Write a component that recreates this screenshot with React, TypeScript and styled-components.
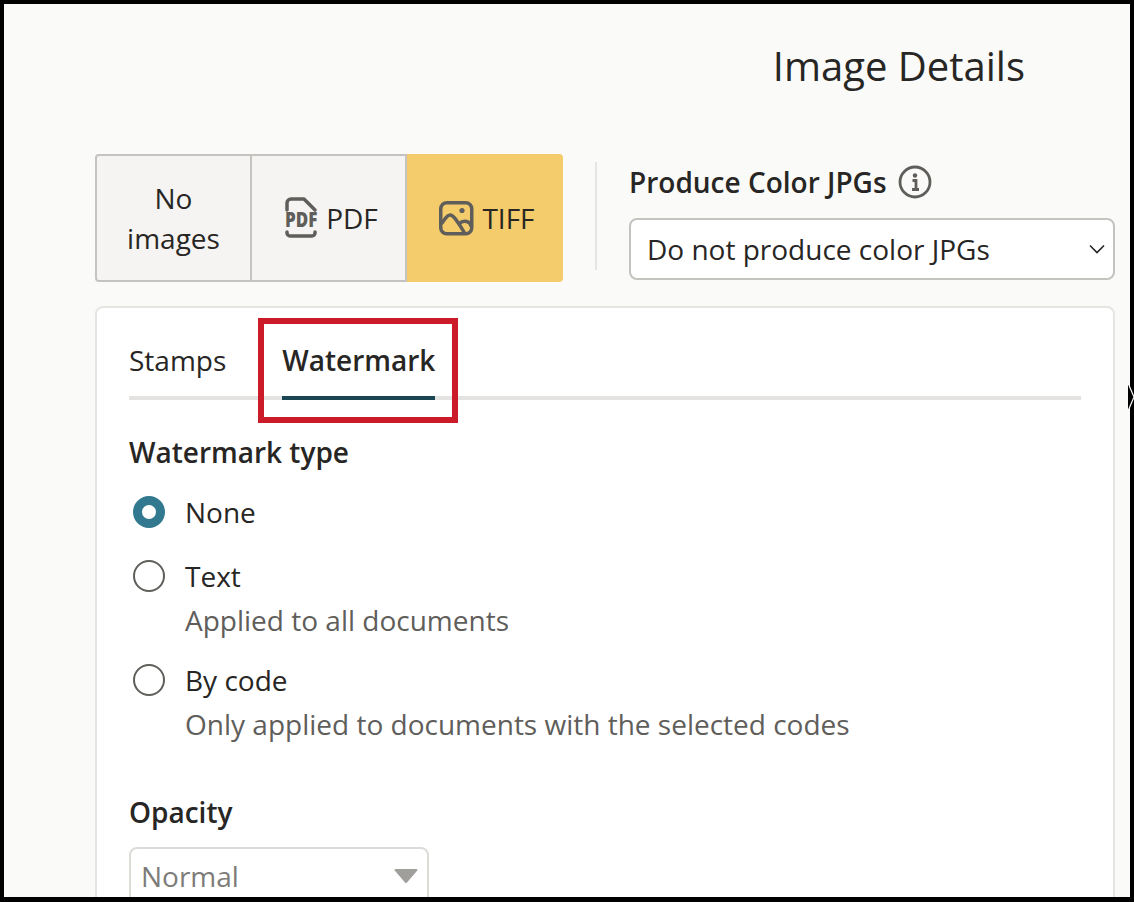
import React from 'react';
import styled, { createGlobalStyle } from 'styled-components';

const GlobalStyle = createGlobalStyle`
  html, body {
    margin: 0;
    padding: 0;
    background: #000;
  }
  * {
    box-sizing: border-box;
  }
`;

const Frame = styled.div`
  position: relative;
  width: 1134px;
  height: 902px;
  overflow: hidden;
  padding: 4px 4px 5px 4px;
  background: #000;
  font-family: 'Open Sans', 'Liberation Sans', sans-serif;
  color: #272624;
`;

const Viewport = styled.div`
  height: 100%;
  overflow: hidden;
  padding: 0 15px 0 91px;
  background: #fafaf8;
`;

const Title = styled.h1`
  margin: 0;
  height: 150px;
  padding: 35px 90px 0 0;
  text-align: right;
  font-size: 40px;
  line-height: 54px;
  font-weight: 400;
`;

const TopRow = styled.div`
  display: flex;
  align-items: flex-start;
  height: 152px;
`;

const ModeGroup = styled.div`
  display: flex;
  width: 468px;
  height: 128px;
`;

const ModeButton = styled.div<{ $active?: boolean; $first?: boolean }>`
  width: ${(p) => (p.$first ? '157px' : p.$active ? '156px' : '155px')};
  display: flex;
  align-items: center;
  justify-content: center;
  gap: 8px;
  padding-left: ${(p) => (p.$first ? '0' : '5px')};
  text-align: center;
  font-size: 28px;
  line-height: 40px;
  background: ${(p) => (p.$active ? '#f4cc6b' : '#f5f4f2')};
  border: 2px solid ${(p) => (p.$active ? '#f4cc6b' : '#c4c3c0')};
  border-left-width: ${(p) => (p.$first ? '2px' : '0')};
  border-radius: ${(p) =>
    p.$first ? '4px 0 0 4px' : p.$active ? '0 4px 4px 0' : '0'};
`;

const Divider = styled.div`
  width: 2px;
  height: 108px;
  margin: 8px 32px 0 32px;
  background: #e6e5e2;
`;

const SelectColumn = styled.div`
  flex: 1;
  min-width: 0;
`;

const FieldLabel = styled.div`
  display: flex;
  align-items: center;
  gap: 11px;
  height: 64px;
  padding: 0 0 8px 0;
  font-size: 28px;
  font-weight: 600;
`;

const SelectBox = styled.div`
  display: flex;
  align-items: center;
  justify-content: space-between;
  height: 62px;
  padding: 0 7px 0 16px;
  background: #fff;
  border: 2px solid #c4c3c0;
  border-radius: 8px;
  font-size: 28px;
`;

const Card = styled.div`
  height: 640px;
  padding: 0 32px;
  background: #fff;
  border: 2px solid #e6e5e2;
  border-radius: 8px;
`;

const TabBar = styled.div`
  display: flex;
  gap: 56px;
  height: 92px;
  border-bottom: 4px solid #e4e3e1;
`;

const Tab = styled.div<{ $active?: boolean }>`
  height: 92px;
  padding-top: 30px;
  font-size: 28px;
  line-height: 44px;
  font-weight: ${(p) => (p.$active ? 600 : 400)};
  border-bottom: 4px solid ${(p) => (p.$active ? '#1a4654' : 'transparent')};
`;

const SectionLabel = styled.div<{ $gap?: number }>`
  margin-top: ${(p) => p.$gap ?? 30}px;
  font-size: 28px;
  line-height: 44px;
  font-weight: 600;
`;

const RadioList = styled.div`
  display: flex;
  flex-direction: column;
  gap: 16px;
  margin-top: 16px;
`;

const RadioRow = styled.div`
  display: flex;
  gap: 20px;
  min-height: 48px;
  padding-left: 4px;
`;

const RadioMark = styled.span<{ $checked?: boolean }>`
  flex: none;
  width: 32px;
  height: 32px;
  margin-top: 6px;
  border-radius: 50%;
  background: #fff;
  border: ${(p) => (p.$checked ? '9px solid #32788f' : '2px solid #5f5e5b')};
`;

const RadioText = styled.div`
  font-size: 28px;
  line-height: 44px;
`;

const RadioHint = styled.div`
  color: #5f5e5b;
`;

const SmallSelect = styled.div`
  display: flex;
  justify-content: space-between;
  align-items: center;
  width: 300px;
  height: 62px;
  margin-top: 13px;
  padding: 0 9px 4px 10px;
  border: 2px solid #dcdbd8;
  border-radius: 8px;
  font-size: 28px;
  color: #7d7c79;
`;

const Caret = styled.svg`
  flex: none;
`;

const Callout = styled.div`
  position: absolute;
  left: 258px;
  top: 318px;
  width: 200px;
  height: 105px;
  border: 6px solid #cb1b28;
`;

const PointerMark = styled.svg`
  position: absolute;
  left: 1128px;
  top: 382px;
`;

const PdfIcon = () => (
  <svg width="34" height="42" viewBox="0 0 34 42" fill="none">
    <path
      d="M3 13V6a4 4 0 0 1 4-4h13l11 11M3 35v1a3 3 0 0 0 3 3h22a3 3 0 0 0 3-3v-1"
      stroke="#5f5e5b"
      strokeWidth="3.5"
      strokeLinecap="round"
      strokeLinejoin="round"
    />
    <text
      transform="translate(1 30) scale(1 1.2)"
      fontFamily="'Open Sans', sans-serif"
      fontSize="17"
      fontWeight="800"
      fill="#5f5e5b"
    >
      PDF
    </text>
  </svg>
);

const ImageIcon = () => (
  <svg width="36" height="36" viewBox="0 0 36 36" fill="none">
    <rect x="2.75" y="2.75" width="31" height="31" rx="6" stroke="#5f5e5b" strokeWidth="3.5" />
    <path
      d="M4 23c3-4 5-8 8-8 4 0 9 9 14 17M22 23c4-3 10-2 11 3"
      stroke="#5f5e5b"
      strokeWidth="3.5"
      strokeLinecap="round"
      strokeLinejoin="round"
    />
    <circle cx="24" cy="10.5" r="2.6" fill="#5f5e5b" />
  </svg>
);

const InfoIcon = () => (
  <svg width="34" height="34" viewBox="0 0 34 34" fill="none">
    <circle cx="17" cy="17" r="15" stroke="#5f5e5b" strokeWidth="2.8" />
    <circle cx="17" cy="10.5" r="2.2" fill="#5f5e5b" />
    <path d="M14.5 15.5H18V24M14 24.5h7" stroke="#5f5e5b" strokeWidth="2.8" />
  </svg>
);

const ChevronIcon = () => (
  <svg width="18" height="10" viewBox="0 0 18 10" fill="none">
    <path d="M2 1.5l7 7 7-7" stroke="#272624" strokeWidth="1.6" />
  </svg>
);

export default function App() {
  return (
    <>
      <GlobalStyle />
      <Frame>
        <Viewport>
          <Title>Image Details</Title>
          <TopRow>
            <ModeGroup>
              <ModeButton $first>
                No
                <br />
                images
              </ModeButton>
              <ModeButton>
                <PdfIcon />
                PDF
              </ModeButton>
              <ModeButton $active>
                <ImageIcon />
                TIFF
              </ModeButton>
            </ModeGroup>
            <Divider />
            <SelectColumn>
              <FieldLabel>
                Produce Color JPGs
                <InfoIcon />
              </FieldLabel>
              <SelectBox>
                Do not produce color JPGs
                <ChevronIcon />
              </SelectBox>
            </SelectColumn>
          </TopRow>
          <Card>
            <TabBar>
              <Tab>Stamps</Tab>
              <Tab $active>Watermark</Tab>
            </TabBar>
            <SectionLabel>Watermark type</SectionLabel>
            <RadioList>
              <RadioRow>
                <RadioMark $checked />
                <RadioText>None</RadioText>
              </RadioRow>
              <RadioRow>
                <RadioMark />
                <RadioText>
                  Text
                  <RadioHint>Applied to all documents</RadioHint>
                </RadioText>
              </RadioRow>
              <RadioRow>
                <RadioMark />
                <RadioText>
                  By code
                  <RadioHint>Only applied to documents with the selected codes</RadioHint>
                </RadioText>
              </RadioRow>
            </RadioList>
            <SectionLabel $gap={44}>Opacity</SectionLabel>
            <SmallSelect>
              Normal
              <Caret width="24" height="14" viewBox="0 0 24 14">
                <path d="M1.5 0h21a1 1 0 0 1 .8 1.6L13 13.4a1.3 1.3 0 0 1-2 0L.7 1.6A1 1 0 0 1 1.5 0z" fill="#a09f9c" />
              </Caret>
            </SmallSelect>
          </Card>
        </Viewport>
        <Callout />
        <PointerMark width="6" height="30" viewBox="0 0 6 30">
          <path d="M0 1l6 14-6 14z" fill="#000" />
          <path d="M0 1l6 14-6 14" fill="none" stroke="#fff" strokeWidth="1.2" />
        </PointerMark>
      </Frame>
    </>
  );
}
